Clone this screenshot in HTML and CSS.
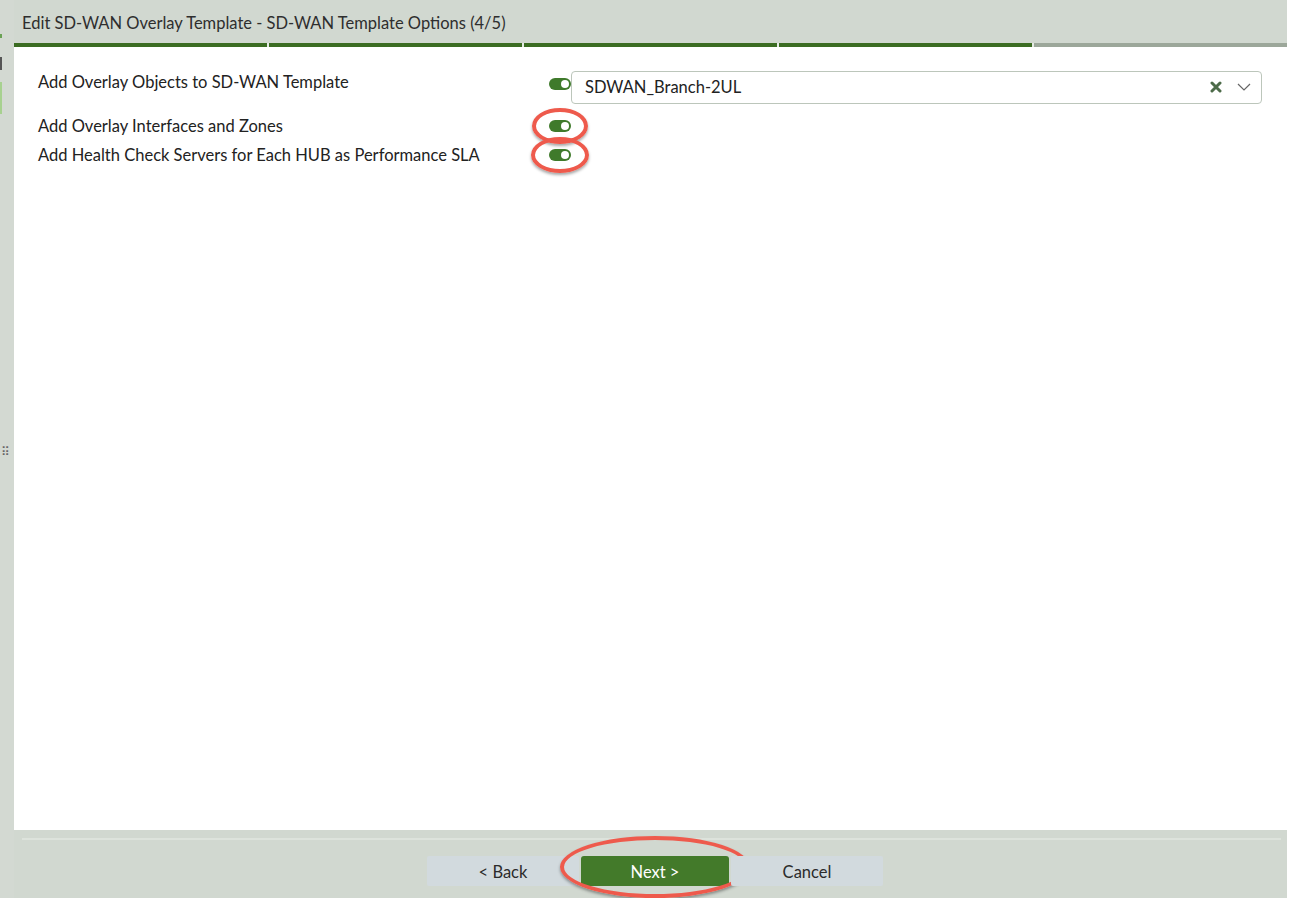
FILE: index.html
```html
<!DOCTYPE html>
<html>
<head>
<meta charset="utf-8">
<link rel="stylesheet" href="styles.css">
</head>
<body>
<div class="app">
  <aside class="side">
    <span class="mark m1"></span>
    <span class="mark m2"></span>
    <span class="mark m3"></span>
    <span class="grip">⠿</span>
  </aside>
  <main class="dialog">
    <header class="head">Edit SD-WAN Overlay Template - SD-WAN Template Options (4/5)</header>
    <div class="steps">
      <span class="step done"></span>
      <span class="step done"></span>
      <span class="step done"></span>
      <span class="step done"></span>
      <span class="step"></span>
    </div>
    <section class="body">
      <div class="row r1">
        <label class="lbl">Add Overlay Objects to SD-WAN Template</label>
        <span class="toggle"></span>
        <div class="select">
          <span class="val">SDWAN_Branch-2UL</span>
          <svg class="clear" width="12" height="12" viewBox="0 0 12 12"><path d="M2 2 L10 10 M10 2 L2 10" stroke="#4d6b49" stroke-width="3" stroke-linecap="round"/></svg>
          <svg class="chev" width="14" height="10" viewBox="0 0 14 10"><path d="M1 2 L7 8 L13 2" fill="none" stroke="#666" stroke-width="1.2"/></svg>
        </div>
      </div>
      <div class="row r2">
        <label class="lbl">Add Overlay Interfaces and Zones</label>
        <span class="toggle"><span class="ring"></span></span>
      </div>
      <div class="row r3">
        <label class="lbl">Add Health Check Servers for Each HUB as Performance SLA</label>
        <span class="toggle"><span class="ring"></span></span>
      </div>
    </section>
    <footer class="foot">
      <div class="btns">
        <button class="btn">&lt; Back</button>
        <button class="btn primary">Next &gt;<span class="ring big"></span></button>
        <button class="btn">Cancel</button>
      </div>
    </footer>
  </main>
</div>
</body>
</html>
```
FILE: styles.css
```css
html, body { margin: 0; padding: 0; background: #fff; }
body { font-family: Lato, "Open Sans", sans-serif; color: #2b2b2b; }
.app { width: 1287px; height: 898px; display: flex; background: #d1d8d0; }
.side { width: 14px; position: relative; background: #d3d9d2; }
.mark { position: absolute; left: 0; width: 2px; }
.m1 { top: 34px; height: 4px; background: #6aa255; }
.m2 { top: 57px; height: 13px; background: #555; }
.m3 { top: 82px; height: 32px; background: #a7d18f; }
.grip { position: absolute; left: 1px; top: 446px; font-size: 12px; color: #666; line-height: 1; }
.dialog { flex: 1; display: flex; flex-direction: column; }
.head { height: 43px; box-sizing: border-box; padding: 13px 0 0 8px; font-size: 16.5px; color: #2e2e2e; }
.steps { display: flex; gap: 2px; height: 4px; background: #e6ebe5; }
.step { flex: 1; background: #9ca79a; }
.step.done { background: #3b6c22; }
.body { flex: 1; background: #fff; padding: 23px 25px 0 24px; position: relative; }
.row { display: flex; align-items: center; position: relative; }
.lbl { width: 510px; font-size: 16.5px; color: #222; }
.r1 { height: 34px; }
.r1 .lbl { align-self: flex-start; padding-top: 2px; }
.r2 { height: 20px; margin-top: 12px; }
.r3 { height: 20px; margin-top: 9px; }
.toggle { width: 22px; height: 12px; border-radius: 6px; background: #3f7a2b; position: relative; margin-left: 1px; align-self: flex-start; }
.r1 .toggle { margin-top: 8px; }
.r2 .toggle, .r3 .toggle { align-self: center; }
.toggle::after { content: ""; position: absolute; right: 2px; top: 2px; width: 8px; height: 8px; border-radius: 50%; background: #fff; }
.select { flex: 1; height: 33px; box-sizing: border-box; border: 1px solid #bcc6bb; border-radius: 4px; display: flex; align-items: center; padding: 0 10px 0 13px; margin-left: 0; }
.val { flex: 1; font-size: 16.5px; color: #222; }
.clear { margin-right: 15px; }
.ring { position: absolute; left: 50%; top: 50%; width: 48px; height: 28px; transform: translate(-50%, -50%); border: 4px solid #ee5a4c; border-radius: 50%; box-shadow: 0 2px 3px rgba(0,0,0,.35); pointer-events: none; }
.r3 .ring { width: 50px; }
.foot { height: 68px; position: relative; }
.foot::before { content: ""; position: absolute; left: 8px; right: 6px; top: 8px; height: 2px; background: #dde3dc; }
.btns { display: flex; gap: 2px; justify-content: center; padding-top: 26px; margin-left: 9px; }
.btn { width: 152px; height: 30px; border: 0; border-radius: 2px; background: #d2dade; font-family: Lato, "Open Sans", sans-serif; font-size: 16.5px; color: #2b2b2b; position: relative; padding: 2px 0 0; }
.btn.primary { width: 148px; background: #437a2a; color: #fff; border-radius: 3px; }
.ring.big { width: 182px; height: 54px; top: 38%; border-width: 4px; }
```
